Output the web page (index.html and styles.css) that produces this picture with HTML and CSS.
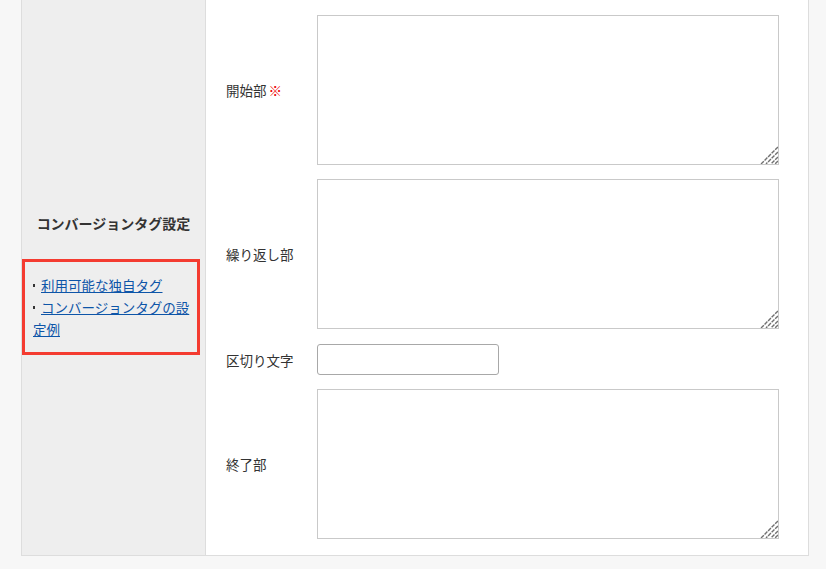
FILE: index.html
```html
<!DOCTYPE html>
<html lang="ja">
<head>
<meta charset="utf-8">
<link rel="stylesheet" href="styles.css">
</head>
<body>
<div class="wrap">
  <div class="table">
    <div class="side">
      <div class="side-title">コンバージョンタグ設定</div>
      <div class="side-links">
        <div class="side-link"><span class="dot"></span><a href="#">利用可能な独自タグ</a></div>
        <div class="side-link"><span class="dot"></span><a href="#">コンバージョンタグの設定例</a></div>
      </div>
    </div>
    <div class="main">
      <div class="row">
        <div class="label">開始部<span class="req">※</span></div>
        <div class="area-box">
          <textarea class="area"></textarea>
          <svg class="grip" width="18" height="18" viewBox="0 0 18 18"><path d="M18 1L1 18M18 6L6 18M18 11L11 18M18 15L15 18" stroke="#707070" stroke-width="1.4" stroke-dasharray="4 1"/></svg>
        </div>
      </div>
      <div class="row">
        <div class="label">繰り返し部</div>
        <div class="area-box">
          <textarea class="area"></textarea>
          <svg class="grip" width="18" height="18" viewBox="0 0 18 18"><path d="M18 1L1 18M18 6L6 18M18 11L11 18M18 15L15 18" stroke="#707070" stroke-width="1.4" stroke-dasharray="4 1"/></svg>
        </div>
      </div>
      <div class="row row-input">
        <div class="label">区切り文字</div>
        <input class="text" type="text">
      </div>
      <div class="row">
        <div class="label">終了部</div>
        <div class="area-box">
          <textarea class="area"></textarea>
          <svg class="grip" width="18" height="18" viewBox="0 0 18 18"><path d="M18 1L1 18M18 6L6 18M18 11L11 18M18 15L15 18" stroke="#707070" stroke-width="1.4" stroke-dasharray="4 1"/></svg>
        </div>
      </div>
    </div>
  </div>
</div>
</body>
</html>
```

FILE: styles.css
```css
html, body {
  margin: 0;
  padding: 0;
  background: #f7f7f7;
}
body {
  font-family: "Noto Sans CJK JP", "Liberation Sans", sans-serif;
  color: #333333;
}
.wrap {
  padding: 0 17px 13px 21px;
}
.table {
  display: grid;
  grid-template-columns: 184px 1fr;
  border: 1px solid #dddddd;
  border-top: none;
  background: #ffffff;
}
.side {
  background: #eeeeee;
  border-right: 1px solid #dddddd;
  padding-top: 213px;
}
.side-title {
  font-size: 14px;
  font-weight: bold;
  line-height: 20px;
  text-align: center;
  margin-bottom: 26px;
}
.side-links {
  width: 178px;
  box-sizing: border-box;
  border: 3px solid #f43b30;
  padding: 12px 5px 12px 8px;
  font-size: 13.5px;
  line-height: 22px;
}
.dot {
  display: inline-block;
  width: 2px;
  height: 3px;
  background: #333333;
  vertical-align: middle;
  margin: 0 6px 3px 0;
}
.side-link a {
  color: #0d55a8;
  text-decoration: underline;
}
.main {
  padding: 8px 0 9px;
}
.row {
  display: grid;
  grid-template-columns: 111px 462px;
  align-items: center;
  height: 150px;
  padding: 7px 0;
}
.row-input {
  height: 31px;
  padding: 8px 0 7px;
}
.label {
  padding-left: 20px;
  font-size: 13.5px;
  line-height: 20px;
}
.req {
  color: #ee0000;
  font-weight: bold;
  margin-left: 2px;
}
.area-box {
  position: relative;
  height: 150px;
}
.area {
  display: block;
  width: 462px;
  height: 150px;
  box-sizing: border-box;
  border: 1px solid #c9c9c9;
  border-radius: 0;
  background: #ffffff;
  margin: 0;
  padding: 4px;
  font-family: inherit;
  resize: none;
}
.grip {
  position: absolute;
  right: 1px;
  bottom: 1px;
}
.text {
  display: block;
  width: 182px;
  height: 31px;
  box-sizing: border-box;
  border: 1px solid #a8a8a8;
  border-radius: 3px;
  background: #ffffff;
  margin: 0;
  padding: 2px 4px;
}
```
